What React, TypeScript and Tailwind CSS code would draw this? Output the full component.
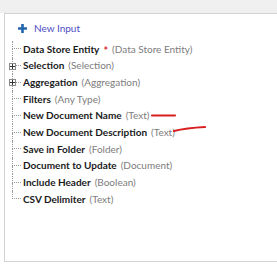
import React from 'react';

type Row = { label: string; type: string; required?: boolean; expandable?: boolean };

const rows: Row[] = [
  { label: 'Data Store Entity', type: '(Data Store Entity)', required: true },
  { label: 'Selection', type: '(Selection)', expandable: true },
  { label: 'Aggregation', type: '(Aggregation)', expandable: true },
  { label: 'Filters', type: '(Any Type)' },
  { label: 'New Document Name', type: '(Text)' },
  { label: 'New Document Description', type: '(Text)' },
  { label: 'Save in Folder', type: '(Folder)' },
  { label: 'Document to Update', type: '(Document)' },
  { label: 'Include Header', type: '(Boolean)' },
  { label: 'CSV Delimiter', type: '(Text)' },
];

const TreeRow: React.FC<{ row: Row; last: boolean }> = ({ row, last }) => (
  <div className="flex h-[16.67px] items-stretch">
    <div className="relative flex w-[9px] flex-col">
      <div className="h-1/2 border-b border-l border-dotted border-[#9a9a9a]" />
      <div className={`h-1/2 ${last ? '' : 'border-l border-dotted border-[#9a9a9a]'}`} />
      {row.expandable && (
        <span className="absolute left-[-3px] top-[5px] flex h-[7px] w-[7px] items-center justify-center border border-[#8a8a8a] bg-white">
          <svg width="5" height="5" viewBox="0 0 5 5">
            <path d="M0 2.5H5M2.5 0V5" stroke="#333" strokeWidth="1" />
          </svg>
        </span>
      )}
    </div>
    <div className="flex items-center whitespace-nowrap pl-[2px] text-[10px]">
      <span className="font-bold text-[#1b1b1b]">{row.label}</span>
      {row.required && (
        <span className="ml-[4px] translate-y-[2px] text-[11px] font-bold text-[#e0303a]">*</span>
      )}
      <span className="ml-[4px] text-[#7d7d7d]">{row.type}</span>
    </div>
  </div>
);

export default function App() {
  return (
    <div
      className="relative h-[266px] w-[277px] overflow-hidden bg-white"
      style={{ fontFamily: 'Lato, "Open Sans", sans-serif' }}
    >
      <div className="h-[13px] bg-[#f0f0f0]" />
      <div className="ml-[4px] h-[249px] w-[300px] border-b border-l border-t border-[#d2d2d2] pl-[7px] pt-[7px]">
        <div className="flex h-[14px] items-center gap-[7px] pl-[6px]">
          <svg width="9" height="9" viewBox="0 0 9 9">
            <path d="M4.5 0V9M0 4.5H9" stroke="#2466ad" strokeWidth="2.6" />
          </svg>
          <span className="text-[10px] text-[#4d4dc4]">New Input</span>
        </div>
        <div className="mt-[6px]">
          {rows.map((r, i) => (
            <TreeRow key={r.label} row={r} last={i === rows.length - 1} />
          ))}
        </div>
      </div>
      <svg className="absolute left-0 top-0" width="277" height="266" viewBox="0 0 277 266" fill="none">
        <path d="M152 115.5 L175 115.5" stroke="#d81f1f" strokeWidth="2.2" strokeLinecap="round" />
        <path d="M174 131 Q186 128 205 127" stroke="#d81f1f" strokeWidth="2.2" strokeLinecap="round" />
      </svg>
    </div>
  );
}
